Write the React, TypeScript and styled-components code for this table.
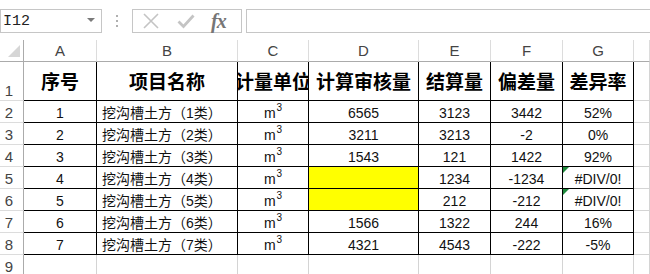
import React from "react";
import styled, { createGlobalStyle } from "styled-components";

const Global = createGlobalStyle`
  html, body { margin: 0; padding: 0; background: #fff; }
  body { width: 650px; height: 274px; overflow: hidden; font-family: "Liberation Sans", "Noto Sans CJK SC", sans-serif; }
`;

const Page = styled.div`
  width: 650px;
  height: 274px;
  overflow: hidden;
  background: #fff;
`;

const FormulaBar = styled.div`
  height: 40px;
  display: flex;
  align-items: flex-start;
  padding-top: 9px;
  box-sizing: border-box;
`;

const NameBox = styled.div`
  width: 102px;
  height: 24px;
  box-sizing: border-box;
  border: 1px solid #c6c6c6;
  display: flex;
  align-items: center;
  justify-content: space-between;
  padding: 0 6px 0 2px;
  font-family: "Liberation Mono", monospace;
  font-size: 15px;
  color: #222;
`;

const DropArrow = styled.span`
  width: 0;
  height: 0;
  border-left: 4px solid transparent;
  border-right: 4px solid transparent;
  border-top: 4px solid #7a7a7a;
  margin-top: -3px;
`;

const Dots = styled.div`
  width: 30px;
  height: 24px;
  display: flex;
  flex-direction: column;
  align-items: center;
  justify-content: center;
  gap: 3px;
  & > span {
    width: 2px;
    height: 2px;
    background: #b0b0b0;
  }
`;

const ButtonBox = styled.div`
  width: 110px;
  height: 24px;
  box-sizing: border-box;
  border: 1px solid #c6c6c6;
  display: flex;
  align-items: center;
  padding-left: 9px;
  gap: 17px;
`;

const Fx = styled.span`
  font-family: "Liberation Serif", serif;
  font-style: italic;
  font-weight: bold;
  font-size: 20px;
  color: #767676;
  letter-spacing: -1px;
  margin-left: -1px;
  line-height: 20px;
`;

const FormulaInput = styled.div`
  flex: 1;
  height: 24px;
  box-sizing: border-box;
  border: 1px solid #c6c6c6;
  border-right: none;
  margin-left: 4px;
`;

const Sheet = styled.div`
  display: grid;
  grid-template-columns: 24px 73px 141px 71px 110px 72px 72px 71px 1fr;
  grid-template-rows: 22px 39px repeat(7, 22px) 22px;
`;

const ColHead = styled.div<{ $first?: boolean }>`
  box-sizing: border-box;
  border-bottom: 1px solid #ababab;
  border-right: 1px solid ${(p) => (p.$first ? "#ababab" : "#dcdcdc")};
  display: flex;
  align-items: flex-end;
  justify-content: center;
  padding-bottom: 2px;
  font-family: "Liberation Sans", sans-serif;
  font-size: 15px;
  color: #444;
  position: relative;
`;

const Corner = styled.span`
  position: absolute;
  right: 3px;
  bottom: 4px;
  width: 0;
  height: 0;
  border-left: 12px solid transparent;
  border-bottom: 12px solid #d6d6d6;
`;

const RowHead = styled.div`
  box-sizing: border-box;
  border-right: 1px solid #ababab;
  border-bottom: 1px solid #dcdcdc;
  display: flex;
  align-items: flex-end;
  justify-content: center;
  padding-bottom: 0px;
  padding-right: 5px;
  font-family: "Liberation Sans", sans-serif;
  font-size: 15px;
  line-height: 18px;
  color: #444;
`;

const Cell = styled.div<{ $dark?: boolean; $fill?: string; $align?: "left" | "center" }>`
  box-sizing: border-box;
  border-right: 1px solid ${(p) => (p.$dark ? "#000" : "#d4d4d4")};
  border-bottom: 1px solid ${(p) => (p.$dark ? "#000" : "#d4d4d4")};
  background: ${(p) => p.$fill || "transparent"};
  display: flex;
  align-items: center;
  justify-content: ${(p) => (p.$align === "left" ? "flex-start" : "center")};
  padding: 2px ${(p) => (p.$align === "left" ? "0 0 5px" : "0 0 0")};
  overflow: hidden;
  white-space: nowrap;
  font-family: "Liberation Sans", "Noto Sans CJK SC", sans-serif;
  font-size: 14px;
  line-height: 16px;
  color: #111;
  position: relative;
`;

const HeadCell = styled(Cell)`
  font-family: "Noto Sans CJK SC", sans-serif;
  font-weight: bold;
  font-size: 19px;
  line-height: 22px;
  padding: 0;
  color: #000;
`;

const Unit = styled.span`
  display: inline-block;
  line-height: 16px;
  & > sup {
    font-size: 10px;
    line-height: 0;
    vertical-align: 7px;
    margin-left: 1px;
  }
`;

const ErrFlag = styled.span`
  position: absolute;
  left: 0;
  top: 0;
  width: 0;
  height: 0;
  border-top: 6px solid #1e8a3c;
  border-right: 6px solid transparent;
`;

type Row = {
  n: string;
  name: string;
  audit: string;
  settle: string;
  diff: string;
  rate: string;
  err?: boolean;
};

const rows: Row[] = [
  { n: "1", name: "挖沟槽土方（1类）", audit: "6565", settle: "3123", diff: "3442", rate: "52%" },
  { n: "2", name: "挖沟槽土方（2类）", audit: "3211", settle: "3213", diff: "-2", rate: "0%" },
  { n: "3", name: "挖沟槽土方（3类）", audit: "1543", settle: "121", diff: "1422", rate: "92%" },
  { n: "4", name: "挖沟槽土方（4类）", audit: "", settle: "1234", diff: "-1234", rate: "#DIV/0!", err: true },
  { n: "5", name: "挖沟槽土方（5类）", audit: "", settle: "212", diff: "-212", rate: "#DIV/0!", err: true },
  { n: "6", name: "挖沟槽土方（6类）", audit: "1566", settle: "1322", diff: "244", rate: "16%" },
  { n: "7", name: "挖沟槽土方（7类）", audit: "4321", settle: "4543", diff: "-222", rate: "-5%" },
];

const letters = ["A", "B", "C", "D", "E", "F", "G", ""];
const headers = ["序号", "项目名称", "计量单位", "计算审核量", "结算量", "偏差量", "差异率"];

export default function App() {
  return (
    <Page>
      <Global />
      <FormulaBar>
        <NameBox>
          <span>I12</span>
          <DropArrow />
        </NameBox>
        <Dots>
          <span />
          <span />
          <span />
        </Dots>
        <ButtonBox>
          <svg width="18" height="18" viewBox="0 0 18 18">
            <path d="M2 2 L16 16 M16 2 L2 16" stroke="#c4c4c4" strokeWidth="1.6" fill="none" />
          </svg>
          <svg width="18" height="18" viewBox="0 0 18 18">
            <path d="M1.5 9.5 L6.5 14.5 L16.5 3.5" stroke="#c4c4c4" strokeWidth="2.8" fill="none" />
          </svg>
          <Fx>fx</Fx>
        </ButtonBox>
        <FormulaInput />
      </FormulaBar>
      <Sheet>
        <ColHead $first>
          <Corner />
        </ColHead>
        {letters.map((l, i) => (
          <ColHead key={"c" + i}>{l}</ColHead>
        ))}

        <RowHead>1</RowHead>
        {headers.map((h) => (
          <HeadCell key={h} $dark>
            {h}
          </HeadCell>
        ))}
        <Cell />

        {rows.map((r, i) => (
          <React.Fragment key={r.n}>
            <RowHead>{i + 2}</RowHead>
            <Cell $dark>{r.n}</Cell>
            <Cell $dark $align="left">
              {r.name}
            </Cell>
            <Cell $dark>
              <Unit>
                m<sup>3</sup>
              </Unit>
            </Cell>
            <Cell $dark $fill={r.audit === "" ? "#ffff00" : undefined}>
              {r.audit}
            </Cell>
            <Cell $dark>{r.settle}</Cell>
            <Cell $dark>{r.diff}</Cell>
            <Cell $dark>
              {r.err && <ErrFlag />}
              {r.rate}
            </Cell>
            <Cell />
          </React.Fragment>
        ))}

        <RowHead>9</RowHead>
        {letters.map((_, i) => (
          <Cell key={"e" + i} />
        ))}
      </Sheet>
    </Page>
  );
}
